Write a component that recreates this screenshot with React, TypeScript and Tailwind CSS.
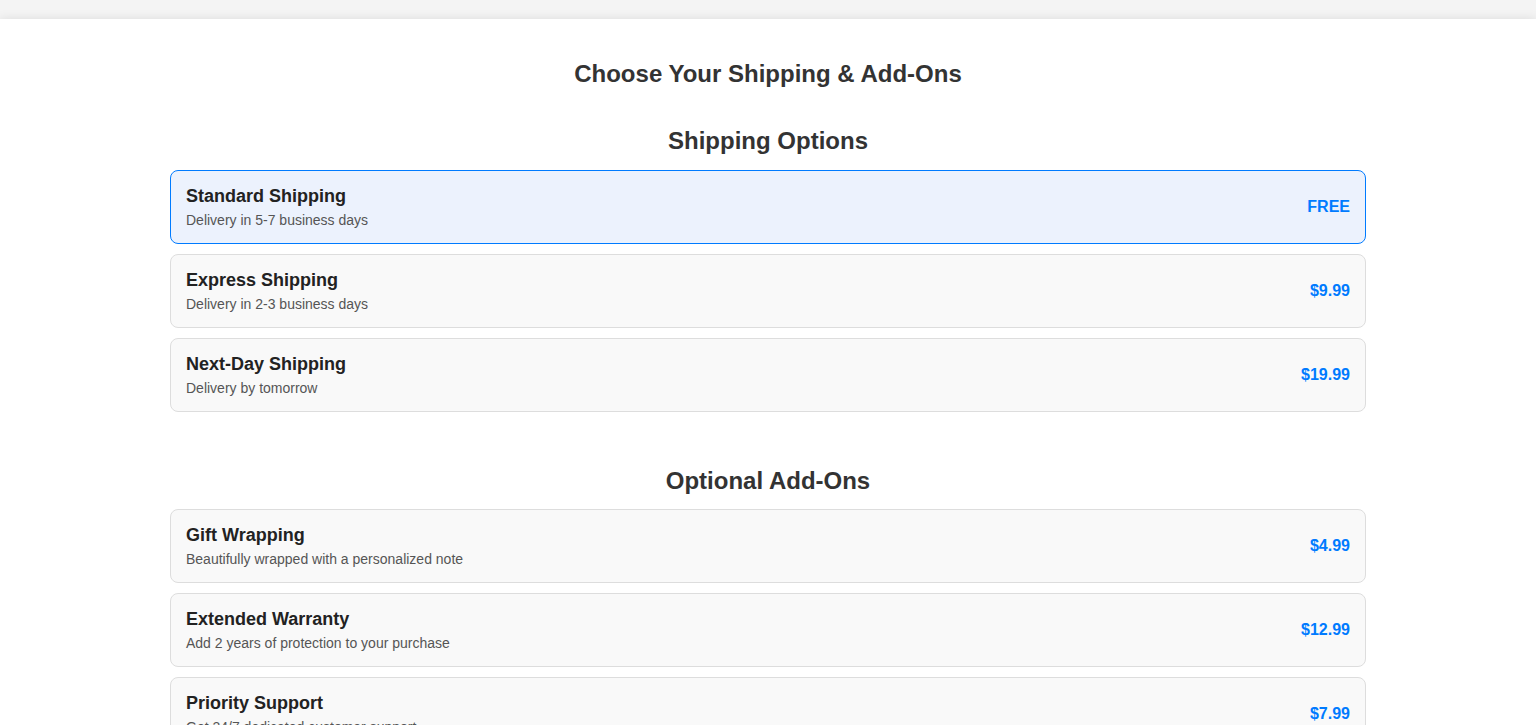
const shipping = [
  { name: "Standard Shipping", desc: "Delivery in 5-7 business days", price: "FREE", selected: true },
  { name: "Express Shipping", desc: "Delivery in 2-3 business days", price: "$9.99" },
  { name: "Next-Day Shipping", desc: "Delivery by tomorrow", price: "$19.99" },
];

const addons = [
  { name: "Gift Wrapping", desc: "Beautifully wrapped with a personalized note", price: "$4.99" },
  { name: "Extended Warranty", desc: "Add 2 years of protection to your purchase", price: "$12.99" },
  { name: "Priority Support", desc: "Get 24/7 dedicated customer support", price: "$7.99" },
];

type Option = { name: string; desc: string; price: string; selected?: boolean };

function OptionCard({ opt }: { opt: Option }) {
  return (
    <div
      className={
        "flex items-center justify-between rounded-lg border px-[15px] py-[15px] " +
        (opt.selected ? "border-[#007bff] bg-[#ecf2fd]" : "border-[#dddddd] bg-[#f9f9f9]")
      }
    >
      <div>
        <div className="text-[18px] font-bold leading-[21px] text-[#222]">{opt.name}</div>
        <div className="mt-[5px] text-[14px] leading-[16px] text-[#555]">{opt.desc}</div>
      </div>
      <div className="text-[16px] font-bold text-[#007bff]">{opt.price}</div>
    </div>
  );
}

export default function App() {
  return (
    <div className="min-h-screen bg-[#f4f4f4] pt-[19px] font-['Liberation_Sans',Arial,sans-serif]">
      <div className="min-h-[706px] bg-white pb-10 shadow-[0_0_10px_rgba(0,0,0,0.1)]">
        <h1 className="pt-[41px] text-center text-[24px] font-bold leading-[28px] text-[#333]">
          Choose Your Shipping &amp; Add-Ons
        </h1>
        <div className="mx-auto w-[1196px]">
          <h2 className="mt-[39px] mb-[15px] text-center text-[24px] font-bold leading-[28px] text-[#333]">
            Shipping Options
          </h2>
          <div className="flex flex-col gap-[10px]">
            {shipping.map((o) => (
              <OptionCard key={o.name} opt={o} />
            ))}
          </div>
          <h2 className="mt-[55px] mb-[14px] text-center text-[24px] font-bold leading-[28px] text-[#333]">
            Optional Add-Ons
          </h2>
          <div className="flex flex-col gap-[10px]">
            {addons.map((o) => (
              <OptionCard key={o.name} opt={o} />
            ))}
          </div>
        </div>
      </div>
    </div>
  );
}
